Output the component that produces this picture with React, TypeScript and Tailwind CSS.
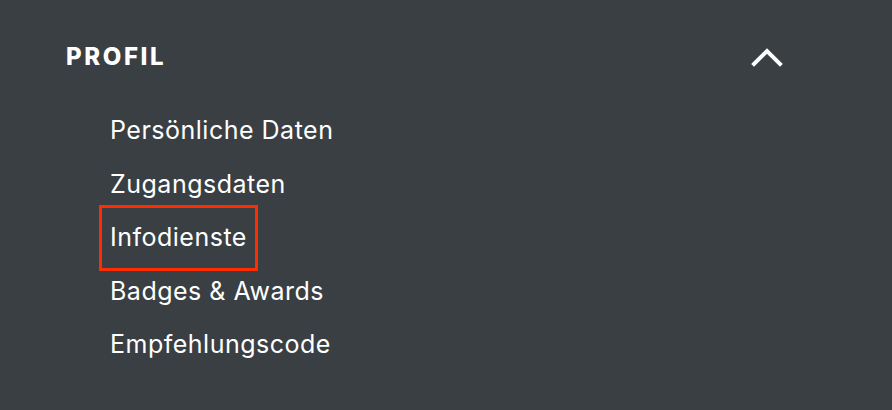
export default function App() {
  const items = ["Persönliche Daten", "Zugangsdaten", "Infodienste", "Badges & Awards", "Empfehlungscode"];
  return (
    <div className="w-[892px] h-[410px] bg-[#393f43] text-white overflow-hidden" style={{ fontFamily: "Inter, 'Noto Sans', sans-serif" }}>
      <div className="flex items-center justify-between pl-[66px] pr-[108px] pt-[38px] h-[76px]">
        <span className="text-[24px] font-extrabold leading-none tracking-[2.6px]">PROFIL</span>
        <svg width="34" height="22" viewBox="0 0 34 22" className="block">
          <polyline points="4,18 17,5 30,18" fill="none" stroke="white" strokeWidth="4" strokeLinecap="square" />
        </svg>
      </div>
      <ul className="flex flex-col pl-[110px] pt-[28px]">
        {items.map((t) => (
          <li key={t} className="h-[53.5px] flex items-center text-[25px] leading-none tracking-[0.5px]">
            {t === "Infodienste" ? (
              <span className="relative">
                {t}
                <span className="absolute left-[-11px] right-[-11px] top-[-20px] bottom-[-21px] border-[3px] border-[#ff2d00]" />
              </span>
            ) : (
              t
            )}
          </li>
        ))}
      </ul>
    </div>
  );
}
